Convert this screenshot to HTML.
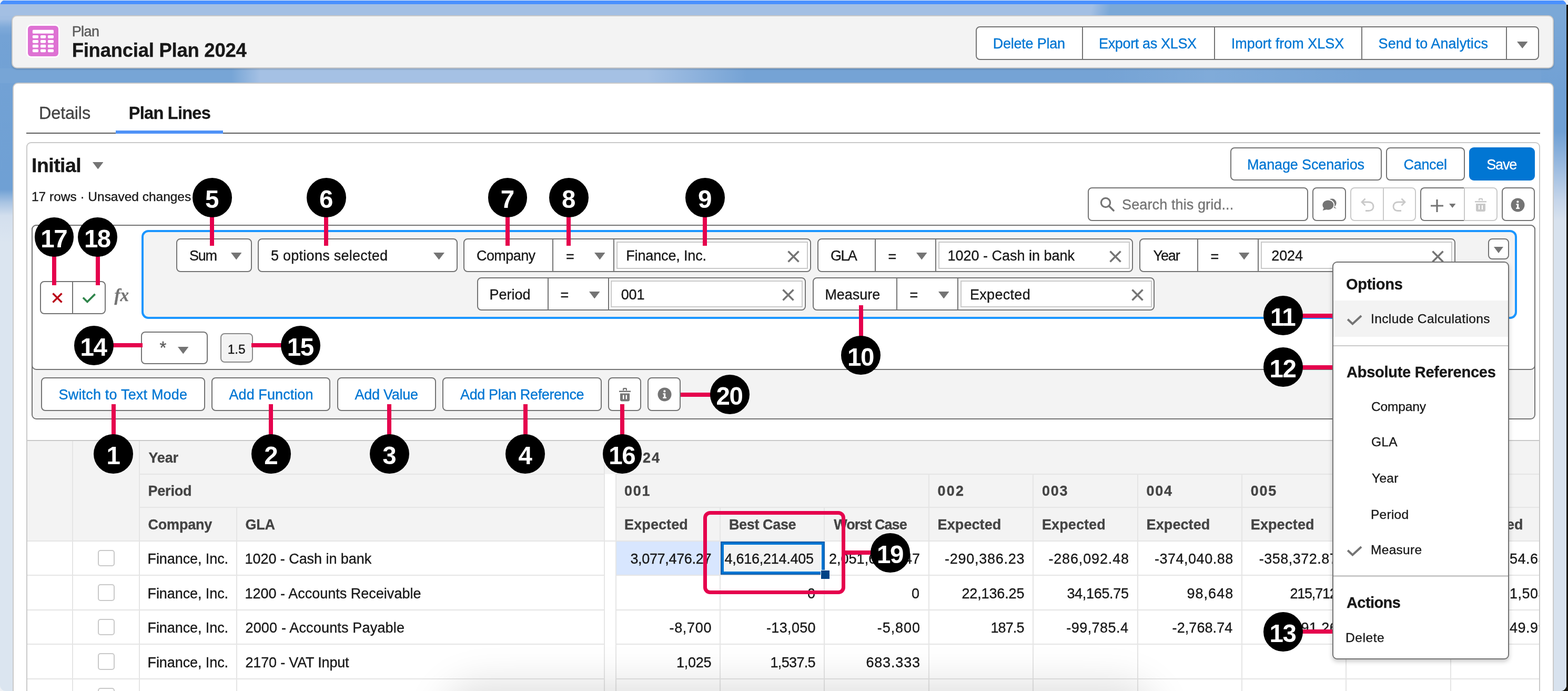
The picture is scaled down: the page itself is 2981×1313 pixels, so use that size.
<!DOCTYPE html>
<html lang="en"><head><meta charset="utf-8"><title>Financial Plan 2024</title>
<style>
html,body{margin:0;padding:0;}
body{width:2981px;height:1313px;overflow:hidden;position:relative;background:#eef1f5;font-family:'Liberation Sans', sans-serif;}
#r{position:absolute;left:0;top:0;width:2978px;height:1313px;overflow:hidden;border-radius:11px;will-change:transform;}
#k{position:absolute;left:2962px;top:9px;width:19px;height:1304px;background:#17160f;}
#r div,#r svg,#r span{position:absolute;box-sizing:border-box;}
#r span{white-space:nowrap;-webkit-text-stroke:0.35px currentColor;}
.c{background:#000;color:#fff;border-radius:50%;text-align:center;font-weight:700;font-size:47.5px;letter-spacing:-1.5px;text-indent:-1.5px;}
.b{border:2px solid #747474;background:#fff;border-radius:8px;}
</style></head>
<body><div id="k"></div><div id="r">
<div style="left:0px;top:0px;width:2981px;height:1313px;background:linear-gradient(180deg,#a2bfe3 0px,#a0bde2 36px,#7faad9 52px,#73a2d5 68px,#6fa0d4 360px,#a9c4e3 385px,#d3dfee 410px,#dbe5f0 460px,#dbe5f0 100%);"></div>
<div style="left:0px;top:7.5px;width:2981px;height:22.5px;background:linear-gradient(100deg,#a3bfe3 0,#a3bfe3 2045px,#8fb3dd 2062px,#7ba8d7 2080px,#7ba8d7 100%);"></div>
<div style="left:0px;top:130px;width:2981px;height:28px;background:linear-gradient(90deg,#77a5d6 0,#77a5d6 440px,#a5c1e4 495px,#a5c1e4 1230px,#8cb1dc 1330px,#75a3d5 1420px,#75a3d5 2100px,#80abd9 2300px,#75a3d5 2600px,#75a3d5 100%);"></div>
<div style="left:2930px;top:29px;width:48px;height:143px;background:linear-gradient(180deg,#7ba8d7 0,#70a0d4 100%);"></div>
<div style="left:0px;top:0px;width:2981px;height:1px;background:#e9eef5;"></div>
<div style="left:0px;top:1px;width:2981px;height:6.5px;background:#4a90fe;"></div>
<div style="left:22px;top:29px;width:2932px;height:101px;background:#f3f3f3;border:2px solid #c9c9c9;border-radius:10px;box-shadow:0 2px 3px rgba(0,0,0,.16);"></div>
<div style="left:24px;top:157px;width:2930px;height:1176px;background:#fff;border:2px solid #c9c9c9;border-radius:10px;"></div>
<div style="left:50px;top:46px;width:64px;height:64px;background:#fff;border-radius:10px;"></div>
<div style="left:53px;top:49px;width:58px;height:58px;background:#de72d3;border-radius:6px;"></div>
<div style="left:1855px;top:50px;width:1071px;height:64px;background:#fff;border:2px solid #747474;border-radius:8px;"></div>
<div style="left:50px;top:252px;width:2878px;height:2px;background:#5c5c5c;"></div>
<div style="left:50px;top:270px;width:2878px;height:1063px;border:2px solid #c9c9c9;border-radius:9px;background:#fff;"></div>
<svg style="left:53px;top:49px;" width="58" height="58" viewBox="0 0 58 58"><g fill="#fff"><rect x="8.9" y="7.8" width="40.1" height="7" rx="1.6"/><rect x="8.9" y="18" width="11.1" height="5.7" rx="1.6"/><rect x="23.9" y="18" width="10.3" height="5.7" rx="1.6"/><rect x="37.9" y="18" width="11.1" height="5.7" rx="1.6"/><rect x="8.9" y="27" width="11.1" height="5.7" rx="1.6"/><rect x="23.9" y="27" width="10.3" height="5.7" rx="1.6"/><rect x="37.9" y="27" width="11.1" height="5.7" rx="1.6"/><rect x="8.9" y="35.8" width="11.1" height="5.7" rx="1.6"/><rect x="23.9" y="35.8" width="10.3" height="5.7" rx="1.6"/><rect x="37.9" y="35.8" width="11.1" height="5.7" rx="1.6"/><rect x="8.9" y="44.5" width="11.1" height="5.7" rx="1.6"/><rect x="23.9" y="44.5" width="10.3" height="5.7" rx="1.6"/><rect x="37.9" y="44.5" width="11.1" height="5.7" rx="1.6"/></g></svg>
<div style="left:2057px;top:50px;width:2px;height:64px;background:#747474;"></div>
<div style="left:2308px;top:50px;width:2px;height:64px;background:#747474;"></div>
<div style="left:2588px;top:50px;width:2px;height:64px;background:#747474;"></div>
<div style="left:2863px;top:50px;width:2px;height:64px;background:#747474;"></div>
<div style="left:220px;top:248px;width:204px;height:6px;background:#4f92f7;"></div>
<div class="b" style="left:2339px;top:280px;width:288px;height:63px;"></div>
<div class="b" style="left:2635px;top:280px;width:150px;height:63px;"></div>
<div style="left:2793px;top:280px;width:125px;height:63px;background:#0176d3;border-radius:9px;"></div>
<div class="b" style="left:2068px;top:356px;width:419px;height:64px;"></div>
<div class="b" style="left:2495px;top:356px;width:64px;height:64px;"></div>
<div style="left:2567px;top:356px;width:125px;height:64px;border:2px solid #c9c9c9;background:#fff;border-radius:8px;"></div>
<div style="left:2700px;top:356px;width:85px;height:64px;border:2px solid #747474;border-right:none;background:#fff;border-radius:8px 0 0 8px;"></div>
<div style="left:2783px;top:356px;width:64px;height:64px;border:2px solid #c9c9c9;background:#fff;border-radius:0 8px 8px 0;"></div>
<div class="b" style="left:2855px;top:356px;width:63px;height:64px;"></div>
<div style="left:60px;top:427px;width:2859px;height:370px;background:#f3f3f3;border:2px solid #747474;border-radius:9px;"></div>
<svg style="left:2091px;top:374px;" width="28" height="28" viewBox="0 0 28 28"><circle cx="11" cy="11" r="8.6" stroke="#747474" stroke-width="3.2" fill="none"/><path d="M17 17L26 26" stroke="#747474" stroke-width="3.6" stroke-linecap="round"/></svg>
<svg style="left:2513.5px;top:377px;" width="28" height="24" viewBox="0 0 28 24"><circle cx="18.2" cy="9" r="8.4" fill="#747474"/><path d="M22 15L27 19.5L19 17Z" fill="#747474"/><ellipse cx="10.9" cy="12.6" rx="12.4" ry="11" fill="#fff"/><ellipse cx="10.9" cy="12.6" rx="10.6" ry="9.2" fill="#747474"/><path d="M3 17.5L0.6 23L8.5 21Z" fill="#747474"/></svg>
<div style="left:2629px;top:356px;width:2px;height:64px;background:#c9c9c9;"></div>
<svg style="left:2586px;top:376px;" width="28" height="26" viewBox="0 0 28 26"><path d="M3 8H16C22 8 25 12 25 16.5C25 21 22 24.5 16 24.5H10" fill="none" stroke="#c9c9c9" stroke-width="2.8"/><path d="M9.5 1.5L3 8L9.5 14.5" fill="none" stroke="#c9c9c9" stroke-width="2.8"/></svg>
<svg style="left:2646px;top:376px;" width="28" height="26" viewBox="0 0 28 26"><path d="M25 8H12C6 8 3 12 3 16.5C3 21 6 24.5 12 24.5H18" fill="none" stroke="#c9c9c9" stroke-width="2.8"/><path d="M18.5 1.5L25 8L18.5 14.5" fill="none" stroke="#c9c9c9" stroke-width="2.8"/></svg>
<svg style="left:2718.5px;top:378.2px;" width="26" height="26" viewBox="0 0 26 26"><path d="M13 1V25M1 13H25" stroke="#747474" stroke-width="3.2" fill="none"/></svg>
<svg style="left:2802px;top:375px;" width="26" height="28" viewBox="0 0 26 28"><path d="M2 7H24V9.5H2Z M9 3.5Q9 1.5 11 1.5H15Q17 1.5 17 3.5V6H15V3.8H11V6H9Z M4 12H22V24Q22 27 19 27H7Q4 27 4 24Z M9 15V23H11V15Z M15 15V23H17V15Z" fill="#c9c9c9" fill-rule="evenodd"/></svg>
<svg style="left:2872.2px;top:375.5px;" width="27" height="27" viewBox="0 0 27 27"><circle cx="13.5" cy="13.5" r="13" fill="#747474"/><path d="M10.4 11.2H15.2V18.6H17V21H10.2V18.6H12V13.6H10.4Z" fill="#fff"/><circle cx="13.4" cy="7.4" r="2.1" fill="#fff"/></svg>
<div style="left:60px;top:427px;width:2859px;height:276px;background:#fff;border:2px solid #747474;border-radius:9px;"></div>
<div class="b" style="left:76px;top:534px;width:125px;height:63px;"></div>
<div style="left:269px;top:437px;width:2615px;height:169px;background:#f3f3f3;border:4.2px solid #1b96ff;border-radius:13px;"></div>
<div style="left:137px;top:534px;width:2px;height:63px;background:#747474;"></div>
<svg style="left:99px;top:556.2px;" width="20" height="20" viewBox="0 0 20 20"><path d="M1.5 1.5L18.5 18.5M18.5 1.5L1.5 18.5" stroke="#ba0517" stroke-width="3.4" fill="none"/></svg>
<svg style="left:156px;top:557px;" width="26" height="19" viewBox="0 0 26 19"><path d="M1.9 8.4L10.0 16.5L24.7 1.9" stroke="#2e844a" stroke-width="3.6" fill="none"/></svg>
<div class="b" style="left:335px;top:453px;width:144px;height:64px;"></div>
<div class="b" style="left:490px;top:453px;width:380px;height:64px;"></div>
<div class="b" style="left:881px;top:453px;width:661px;height:64px;"></div>
<div class="b" style="left:1554px;top:453px;width:600px;height:64px;"></div>
<div class="b" style="left:2166px;top:453px;width:601px;height:64px;"></div>
<div class="b" style="left:2829px;top:453px;width:40px;height:40px;"></div>
<div class="b" style="left:907px;top:527px;width:625px;height:63px;"></div>
<div class="b" style="left:1545px;top:527px;width:650px;height:63px;"></div>
<div class="b" style="left:268px;top:630px;width:127px;height:62px;"></div>
<div style="left:419px;top:633px;width:62px;height:56px;background:#f3f3f3;border:2px solid #8a8a8a;border-radius:8px;"></div>
<div class="b" style="left:78px;top:717px;width:312px;height:64px;"></div>
<div class="b" style="left:402px;top:717px;width:226px;height:64px;"></div>
<div class="b" style="left:641px;top:717px;width:188px;height:64px;"></div>
<div class="b" style="left:841px;top:717px;width:303px;height:64px;"></div>
<div class="b" style="left:1156px;top:717px;width:63px;height:64px;"></div>
<div class="b" style="left:1231px;top:717px;width:63px;height:64px;"></div>
<span style="left:217.50px;top:545.00px;font-size:33px;line-height:33px;color:#747474;font-family:'Liberation Serif', serif;font-style:italic;font-weight:700;">fx</span>
<div style="left:1050px;top:453px;width:2px;height:64px;background:#747474;"></div>
<div style="left:1166px;top:453px;width:2px;height:64px;background:#747474;"></div>
<div style="left:1172px;top:459px;width:364px;height:52px;border:2px solid #c9c9c9;background:#fff;"></div>
<div style="left:1663px;top:453px;width:2px;height:64px;background:#747474;"></div>
<div style="left:1778px;top:453px;width:2px;height:64px;background:#747474;"></div>
<div style="left:1784px;top:459px;width:364px;height:52px;border:2px solid #c9c9c9;background:#fff;"></div>
<div style="left:2276px;top:453px;width:2px;height:64px;background:#747474;"></div>
<div style="left:2391px;top:453px;width:2px;height:64px;background:#747474;"></div>
<div style="left:2397px;top:459px;width:364px;height:52px;border:2px solid #c9c9c9;background:#fff;"></div>
<div style="left:1041px;top:527px;width:2px;height:63px;background:#747474;"></div>
<div style="left:1156px;top:527px;width:2px;height:63px;background:#747474;"></div>
<div style="left:1161px;top:533px;width:365px;height:51px;border:2px solid #c9c9c9;background:#fff;"></div>
<div style="left:1704px;top:527px;width:2px;height:63px;background:#747474;"></div>
<div style="left:1820px;top:527px;width:2px;height:63px;background:#747474;"></div>
<div style="left:1826px;top:533px;width:364px;height:51px;border:2px solid #c9c9c9;background:#fff;"></div>
<svg style="left:2883.75px;top:78.5px;" width="20.5" height="13" viewBox="0 0 20.5 13"><path d="M0 0H20.5L10.25 13Z" fill="#747474"/></svg>
<svg style="left:175.75px;top:308.25px;" width="20.5" height="13.5" viewBox="0 0 20.5 13.5"><path d="M0 0H20.5L10.25 13.5Z" fill="#747474"/></svg>
<svg style="left:2754.75px;top:387.2px;" width="12.5" height="8" viewBox="0 0 12.5 8"><path d="M0 0H12.5L6.25 8Z" fill="#747474"/></svg>
<svg style="left:438.75px;top:480.25px;" width="20.5" height="13.5" viewBox="0 0 20.5 13.5"><path d="M0 0H20.5L10.25 13.5Z" fill="#747474"/></svg>
<svg style="left:823.5px;top:480.25px;" width="21" height="13.5" viewBox="0 0 21 13.5"><path d="M0 0H21L10.5 13.5Z" fill="#747474"/></svg>
<svg style="left:1129.75px;top:480.25px;" width="20.5" height="13.5" viewBox="0 0 20.5 13.5"><path d="M0 0H20.5L10.25 13.5Z" fill="#747474"/></svg>
<svg style="left:1496.5px;top:475.5px;" width="23" height="23" viewBox="0 0 23 23"><path d="M1.5 1.5L21.5 21.5M21.5 1.5L1.5 21.5" stroke="#747474" stroke-width="3.5" fill="none"/></svg>
<svg style="left:1741.75px;top:480.25px;" width="20.5" height="13.5" viewBox="0 0 20.5 13.5"><path d="M0 0H20.5L10.25 13.5Z" fill="#747474"/></svg>
<svg style="left:2108.5px;top:475.5px;" width="23" height="23" viewBox="0 0 23 23"><path d="M1.5 1.5L21.5 21.5M21.5 1.5L1.5 21.5" stroke="#747474" stroke-width="3.5" fill="none"/></svg>
<svg style="left:2354.75px;top:480.25px;" width="20.5" height="13.5" viewBox="0 0 20.5 13.5"><path d="M0 0H20.5L10.25 13.5Z" fill="#747474"/></svg>
<svg style="left:2722px;top:475.5px;" width="23" height="23" viewBox="0 0 23 23"><path d="M1.5 1.5L21.5 21.5M21.5 1.5L1.5 21.5" stroke="#747474" stroke-width="3.5" fill="none"/></svg>
<svg style="left:2840px;top:469px;" width="18" height="12" viewBox="0 0 18 12"><path d="M0 0H18L9.0 12Z" fill="#747474"/></svg>
<svg style="left:1119.75px;top:553.75px;" width="20.5" height="13.5" viewBox="0 0 20.5 13.5"><path d="M0 0H20.5L10.25 13.5Z" fill="#747474"/></svg>
<svg style="left:1486.5px;top:549px;" width="23" height="23" viewBox="0 0 23 23"><path d="M1.5 1.5L21.5 21.5M21.5 1.5L1.5 21.5" stroke="#747474" stroke-width="3.5" fill="none"/></svg>
<svg style="left:1783.75px;top:553.75px;" width="20.5" height="13.5" viewBox="0 0 20.5 13.5"><path d="M0 0H20.5L10.25 13.5Z" fill="#747474"/></svg>
<svg style="left:2150.5px;top:549px;" width="23" height="23" viewBox="0 0 23 23"><path d="M1.5 1.5L21.5 21.5M21.5 1.5L1.5 21.5" stroke="#747474" stroke-width="3.5" fill="none"/></svg>
<svg style="left:337.75px;top:659.25px;" width="20.5" height="13.5" viewBox="0 0 20.5 13.5"><path d="M0 0H20.5L10.25 13.5Z" fill="#747474"/></svg>
<svg style="left:1175.5px;top:736px;" width="24" height="27" viewBox="0 0 24 27"><path d="M1 6.5H23V9H1Z M8 3Q8 1 10 1H14Q16 1 16 3V6H14V3.4H10V6H8Z M3 11.5H21V23.5Q21 26.5 18 26.5H6Q3 26.5 3 23.5Z M8 14.5V22.5H10.4V14.5Z M13.6 14.5V22.5H16V14.5Z" fill="#747474" fill-rule="evenodd"/></svg>
<svg style="left:1249.5px;top:735.5px;" width="27" height="27" viewBox="0 0 27 27"><circle cx="13.5" cy="13.5" r="13" fill="#747474"/><path d="M10.4 11.2H15.2V18.6H17V21H10.2V18.6H12V13.6H10.4Z" fill="#fff"/><circle cx="13.4" cy="7.4" r="2.1" fill="#fff"/></svg>
<span style="left:136.70px;top:47.00px;font-size:27px;line-height:27px;color:#5a5a5a;letter-spacing:-0.61px;">Plan</span>
<span style="left:136.70px;top:78.00px;font-size:36.5px;line-height:36.5px;font-weight:700;color:#181818;letter-spacing:-0.26px;">Financial Plan 2024</span>
<span style="left:1887.70px;top:70.00px;font-size:27px;line-height:27px;color:#0176d3;letter-spacing:-0.23px;">Delete Plan</span>
<span style="left:2089.00px;top:70.00px;font-size:27px;line-height:27px;color:#0176d3;letter-spacing:-0.35px;">Export as XLSX</span>
<span style="left:2340.70px;top:70.00px;font-size:27px;line-height:27px;color:#0176d3;">Import from XLSX</span>
<span style="left:2620.60px;top:70.00px;font-size:27px;line-height:27px;color:#0176d3;letter-spacing:0.08px;">Send to Analytics</span>
<span style="left:74.00px;top:199.00px;font-size:32.5px;line-height:32.5px;color:#444444;letter-spacing:-0.20px;">Details</span>
<span style="left:244.80px;top:199.00px;font-size:32.5px;line-height:32.5px;font-weight:700;color:#181818;letter-spacing:-0.73px;">Plan Lines</span>
<span style="left:60.00px;top:296.00px;font-size:37.5px;line-height:37.5px;font-weight:700;color:#181818;letter-spacing:-0.53px;">Initial</span>
<span style="left:60.00px;top:362.00px;font-size:24.5px;line-height:24.5px;color:#181818;letter-spacing:-0.02px;">17 rows · Unsaved changes</span>
<span style="left:2371.00px;top:300.00px;font-size:27px;line-height:27px;color:#0176d3;letter-spacing:-0.14px;">Manage Scenarios</span>
<span style="left:2668.50px;top:300.00px;font-size:27px;line-height:27px;color:#0176d3;letter-spacing:-0.31px;">Cancel</span>
<span style="left:2826.30px;top:300.00px;font-size:27px;line-height:27px;color:#ffffff;letter-spacing:-1.21px;">Save</span>
<span style="left:2133.10px;top:376.00px;font-size:27px;line-height:27px;color:#747474;letter-spacing:0.11px;">Search this grid...</span>
<span style="left:360.00px;top:473.00px;font-size:27px;line-height:27px;color:#181818;letter-spacing:-1.21px;">Sum</span>
<span style="left:515.00px;top:473.00px;font-size:27px;line-height:27px;color:#181818;letter-spacing:0.26px;">5 options selected</span>
<span style="left:906.00px;top:473.00px;font-size:27px;line-height:27px;color:#181818;letter-spacing:-0.58px;">Company</span>
<span style="left:1076.00px;top:475.00px;font-size:27px;line-height:27px;color:#181818;">=</span>
<span style="left:1190.20px;top:473.00px;font-size:27px;line-height:27px;color:#181818;letter-spacing:-0.14px;">Finance, Inc.</span>
<span style="left:1579.00px;top:473.00px;font-size:27px;line-height:27px;color:#181818;letter-spacing:-1.61px;">GLA</span>
<span style="left:1688.50px;top:475.00px;font-size:27px;line-height:27px;color:#181818;">=</span>
<span style="left:1801.60px;top:473.00px;font-size:27px;line-height:27px;color:#181818;letter-spacing:-0.02px;">1020 - Cash in bank</span>
<span style="left:2192.50px;top:473.00px;font-size:27px;line-height:27px;color:#181818;letter-spacing:-1.12px;">Year</span>
<span style="left:2301.50px;top:475.00px;font-size:27px;line-height:27px;color:#181818;">=</span>
<span style="left:2417.30px;top:473.00px;font-size:27px;line-height:27px;color:#181818;letter-spacing:-0.15px;">2024</span>
<span style="left:930.40px;top:547.00px;font-size:27px;line-height:27px;color:#181818;letter-spacing:0.03px;">Period</span>
<span style="left:1065.50px;top:548.00px;font-size:27px;line-height:27px;color:#181818;">=</span>
<span style="left:1180.70px;top:547.00px;font-size:27px;line-height:27px;color:#181818;letter-spacing:-0.15px;">001</span>
<span style="left:1568.40px;top:547.00px;font-size:27px;line-height:27px;color:#181818;letter-spacing:-0.04px;">Measure</span>
<span style="left:1729.50px;top:548.00px;font-size:27px;line-height:27px;color:#181818;">=</span>
<span style="left:1843.90px;top:547.00px;font-size:27px;line-height:27px;color:#181818;letter-spacing:0.32px;">Expected</span>
<span style="left:303.50px;top:644.00px;font-size:33px;line-height:33px;color:#5c5c5c;">*</span>
<span style="left:432.70px;top:652.00px;font-size:24.5px;line-height:24.5px;color:#181818;letter-spacing:-0.12px;">1.5</span>
<span style="left:111.50px;top:737.00px;font-size:27px;line-height:27px;color:#0176d3;letter-spacing:0.19px;">Switch to Text Mode</span>
<span style="left:435.50px;top:737.00px;font-size:27px;line-height:27px;color:#0176d3;letter-spacing:0.08px;">Add Function</span>
<span style="left:674.50px;top:737.00px;font-size:27px;line-height:27px;color:#0176d3;letter-spacing:-0.26px;">Add Value</span>
<span style="left:875.00px;top:737.00px;font-size:27px;line-height:27px;color:#0176d3;letter-spacing:-0.36px;">Add Plan Reference</span>
<div style="left:52px;top:838px;width:2874px;height:190px;background:#f3f3f3;"></div>
<div style="left:52px;top:836px;width:2874px;height:2px;background:#c9c9c9;"></div>
<div style="left:1149px;top:901px;width:22px;height:412px;background:#fff;"></div>
<div style="left:1172px;top:1029px;width:196px;height:63px;background:#d8e6fe;"></div>
<div style="left:137px;top:838px;width:2px;height:475px;background:#e5e5e5;"></div>
<div style="left:264px;top:838px;width:2px;height:475px;background:#e5e5e5;"></div>
<div style="left:449px;top:964px;width:2px;height:349px;background:#e5e5e5;"></div>
<div style="left:1148px;top:838px;width:2px;height:475px;background:#e5e5e5;"></div>
<div style="left:1170px;top:901px;width:2px;height:412px;background:#e5e5e5;"></div>
<div style="left:265px;top:900px;width:884px;height:2px;background:#e5e5e5;"></div>
<div style="left:265px;top:963px;width:884px;height:2px;background:#e5e5e5;"></div>
<div style="left:1171px;top:900px;width:1755px;height:2px;background:#e5e5e5;"></div>
<div style="left:1171px;top:963px;width:1755px;height:2px;background:#e5e5e5;"></div>
<div style="left:52px;top:1027px;width:2874px;height:2px;background:#e5e5e5;"></div>
<div style="left:52px;top:1092px;width:1097px;height:2px;background:#e5e5e5;"></div>
<div style="left:1171px;top:1092px;width:1755px;height:2px;background:#e5e5e5;"></div>
<div style="left:52px;top:1158px;width:1097px;height:2px;background:#e5e5e5;"></div>
<div style="left:1171px;top:1158px;width:1755px;height:2px;background:#e5e5e5;"></div>
<div style="left:52px;top:1223px;width:1097px;height:2px;background:#e5e5e5;"></div>
<div style="left:1171px;top:1223px;width:1755px;height:2px;background:#e5e5e5;"></div>
<div style="left:52px;top:1289px;width:1097px;height:2px;background:#e5e5e5;"></div>
<div style="left:1171px;top:1289px;width:1755px;height:2px;background:#e5e5e5;"></div>
<div style="left:52px;top:1354px;width:1097px;height:2px;background:#e5e5e5;"></div>
<div style="left:1171px;top:1354px;width:1755px;height:2px;background:#e5e5e5;"></div>
<div style="left:1368px;top:964px;width:2px;height:349px;background:#e5e5e5;"></div>
<div style="left:1566px;top:964px;width:2px;height:349px;background:#e5e5e5;"></div>
<div style="left:1765px;top:901px;width:2px;height:412px;background:#e5e5e5;"></div>
<div style="left:1963px;top:901px;width:2px;height:412px;background:#e5e5e5;"></div>
<div style="left:2162px;top:901px;width:2px;height:412px;background:#e5e5e5;"></div>
<div style="left:2360px;top:901px;width:2px;height:412px;background:#e5e5e5;"></div>
<div style="left:2558px;top:901px;width:2px;height:412px;background:#e5e5e5;"></div>
<div style="left:2757px;top:901px;width:2px;height:412px;background:#e5e5e5;"></div>
<div style="left:186px;top:1045px;width:32px;height:31px;border:2px solid #c9c9c9;border-radius:5px;background:#fff;"></div>
<div style="left:186px;top:1110px;width:32px;height:32px;border:2px solid #c9c9c9;border-radius:5px;background:#fff;"></div>
<div style="left:186px;top:1176px;width:32px;height:31px;border:2px solid #c9c9c9;border-radius:5px;background:#fff;"></div>
<div style="left:186px;top:1241px;width:32px;height:32px;border:2px solid #c9c9c9;border-radius:5px;background:#fff;"></div>
<div style="left:186px;top:1307px;width:32px;height:31px;border:2px solid #c9c9c9;border-radius:5px;background:#fff;"></div>
<span style="left:282.50px;top:857.00px;font-size:27px;line-height:27px;font-weight:700;color:#444444;letter-spacing:-0.20px;">Year</span>
<span style="left:281.50px;top:920.00px;font-size:27px;line-height:27px;font-weight:700;color:#444444;letter-spacing:-0.20px;">Period</span>
<span style="left:281.50px;top:984.00px;font-size:27px;line-height:27px;font-weight:700;color:#444444;letter-spacing:-0.20px;">Company</span>
<span style="left:466.50px;top:984.00px;font-size:27px;line-height:27px;font-weight:700;color:#444444;letter-spacing:-0.20px;">GLA</span>
<span style="left:1188.00px;top:857.00px;font-size:27px;line-height:27px;font-weight:700;color:#444444;letter-spacing:1.98px;">2024</span>
<span style="left:1187.10px;top:920.00px;font-size:27px;line-height:27px;font-weight:700;color:#444444;letter-spacing:1.73px;">001</span>
<span style="left:1782.60px;top:920.00px;font-size:27px;line-height:27px;font-weight:700;color:#444444;letter-spacing:2.23px;">002</span>
<span style="left:1981.00px;top:920.00px;font-size:27px;line-height:27px;font-weight:700;color:#444444;letter-spacing:1.73px;">003</span>
<span style="left:2179.60px;top:920.00px;font-size:27px;line-height:27px;font-weight:700;color:#444444;letter-spacing:1.73px;">004</span>
<span style="left:2377.80px;top:920.00px;font-size:27px;line-height:27px;font-weight:700;color:#444444;letter-spacing:1.73px;">005</span>
<span style="left:2576.40px;top:920.00px;font-size:27px;line-height:27px;font-weight:700;color:#444444;letter-spacing:1.73px;">006</span>
<span style="left:2774.80px;top:920.00px;font-size:27px;line-height:27px;font-weight:700;color:#444444;letter-spacing:2.23px;">007</span>
<span style="left:1187.10px;top:984.00px;font-size:27px;line-height:27px;font-weight:700;color:#444444;letter-spacing:0.09px;">Expected</span>
<span style="left:1386.00px;top:984.00px;font-size:27px;line-height:27px;font-weight:700;color:#444444;letter-spacing:-0.38px;">Best Case</span>
<span style="left:1585.20px;top:984.00px;font-size:27px;line-height:27px;font-weight:700;color:#444444;letter-spacing:-0.95px;">Worst Case</span>
<span style="left:1782.60px;top:984.00px;font-size:27px;line-height:27px;font-weight:700;color:#444444;letter-spacing:0.09px;">Expected</span>
<span style="left:1981.00px;top:984.00px;font-size:27px;line-height:27px;font-weight:700;color:#444444;letter-spacing:0.09px;">Expected</span>
<span style="left:2179.60px;top:984.00px;font-size:27px;line-height:27px;font-weight:700;color:#444444;letter-spacing:0.09px;">Expected</span>
<span style="left:2377.80px;top:984.00px;font-size:27px;line-height:27px;font-weight:700;color:#444444;letter-spacing:0.09px;">Expected</span>
<span style="left:2576.40px;top:984.00px;font-size:27px;line-height:27px;font-weight:700;color:#444444;letter-spacing:0.09px;">Expected</span>
<span style="left:2774.80px;top:984.00px;font-size:27px;line-height:27px;font-weight:700;color:#444444;letter-spacing:0.09px;">Expected</span>
<span style="left:280.50px;top:1049.00px;font-size:27px;line-height:27px;color:#181818;letter-spacing:-0.08px;">Finance, Inc.</span>
<span style="left:465.50px;top:1049.00px;font-size:27px;line-height:27px;color:#181818;letter-spacing:-0.05px;">1020 - Cash in bank</span>
<span style="left:1198.40px;top:1049.00px;font-size:27px;line-height:27px;color:#181818;letter-spacing:-0.33px;">3,077,476.27</span>
<span style="left:1575.90px;top:1049.00px;font-size:27px;line-height:27px;color:#181818;letter-spacing:0.04px;">2,051,650.847</span>
<span style="left:1796.00px;top:1049.00px;font-size:27px;line-height:27px;color:#181818;letter-spacing:0.73px;">-290,386.23</span>
<span style="left:1993.40px;top:1049.00px;font-size:27px;line-height:27px;color:#181818;letter-spacing:0.85px;">-286,092.48</span>
<span style="left:2195.00px;top:1049.00px;font-size:27px;line-height:27px;color:#181818;letter-spacing:0.51px;">-374,040.88</span>
<span style="left:2393.70px;top:1049.00px;font-size:27px;line-height:27px;color:#181818;letter-spacing:0.50px;">-358,372.87</span>
<span style="left:2593.60px;top:1049.00px;font-size:27px;line-height:27px;color:#181818;letter-spacing:0.45px;">-352,118.04</span>
<span style="left:2790.79px;top:1049.00px;font-size:27px;line-height:27px;color:#181818;letter-spacing:0.45px;">-341,254.65</span>
<span style="left:280.50px;top:1115.00px;font-size:27px;line-height:27px;color:#181818;letter-spacing:-0.08px;">Finance, Inc.</span>
<span style="left:465.50px;top:1115.00px;font-size:27px;line-height:27px;color:#181818;letter-spacing:0.01px;">1200 - Accounts Receivable</span>
<span style="left:1535.00px;top:1115.00px;font-size:27px;line-height:27px;color:#181818;letter-spacing:0.60px;">0</span>
<span style="left:1733.00px;top:1115.00px;font-size:27px;line-height:27px;color:#181818;letter-spacing:1.00px;">0</span>
<span style="left:1828.50px;top:1115.00px;font-size:27px;line-height:27px;color:#181818;letter-spacing:-0.15px;">22,136.25</span>
<span style="left:2028.40px;top:1115.00px;font-size:27px;line-height:27px;color:#181818;letter-spacing:-0.31px;">34,165.75</span>
<span style="left:2256.50px;top:1115.00px;font-size:27px;line-height:27px;color:#181818;letter-spacing:1.03px;">98,648</span>
<span style="left:2452.40px;top:1115.00px;font-size:27px;line-height:27px;color:#181818;letter-spacing:-1.20px;">215,712</span>
<span style="left:2640.92px;top:1115.00px;font-size:27px;line-height:27px;color:#181818;letter-spacing:0.45px;">187,431</span>
<span style="left:2839.12px;top:1115.00px;font-size:27px;line-height:27px;color:#181818;letter-spacing:0.45px;">241,503</span>
<span style="left:280.50px;top:1180.00px;font-size:27px;line-height:27px;color:#181818;letter-spacing:-0.08px;">Finance, Inc.</span>
<span style="left:466.50px;top:1180.00px;font-size:27px;line-height:27px;color:#181818;letter-spacing:0.17px;">2000 - Accounts Payable</span>
<span style="left:1272.50px;top:1180.00px;font-size:27px;line-height:27px;color:#181818;letter-spacing:0.67px;">-8,700</span>
<span style="left:1457.00px;top:1180.00px;font-size:27px;line-height:27px;color:#181818;letter-spacing:0.34px;">-13,050</span>
<span style="left:1667.80px;top:1180.00px;font-size:27px;line-height:27px;color:#181818;letter-spacing:0.93px;">-5,800</span>
<span style="left:1883.40px;top:1180.00px;font-size:27px;line-height:27px;color:#181818;letter-spacing:-0.89px;">187.5</span>
<span style="left:2027.30px;top:1180.00px;font-size:27px;line-height:27px;color:#181818;letter-spacing:0.45px;">-99,785.4</span>
<span style="left:2228.60px;top:1180.00px;font-size:27px;line-height:27px;color:#181818;letter-spacing:0.07px;">-2,768.74</span>
<span style="left:2425.13px;top:1180.00px;font-size:27px;line-height:27px;color:#181818;letter-spacing:0.45px;">-4,391.26</span>
<span style="left:2641.00px;top:1180.00px;font-size:27px;line-height:27px;color:#181818;letter-spacing:0.45px;">-3,118.5</span>
<span style="left:2821.73px;top:1180.00px;font-size:27px;line-height:27px;color:#181818;letter-spacing:0.45px;">-2,849.99</span>
<span style="left:280.50px;top:1246.00px;font-size:27px;line-height:27px;color:#181818;letter-spacing:-0.08px;">Finance, Inc.</span>
<span style="left:466.50px;top:1246.00px;font-size:27px;line-height:27px;color:#181818;letter-spacing:-0.17px;">2170 - VAT Input</span>
<span style="left:1286.00px;top:1246.00px;font-size:27px;line-height:27px;color:#181818;letter-spacing:-0.29px;">1,025</span>
<span style="left:1464.50px;top:1246.00px;font-size:27px;line-height:27px;color:#181818;letter-spacing:-0.66px;">1,537.5</span>
<span style="left:1646.40px;top:1246.00px;font-size:27px;line-height:27px;color:#181818;letter-spacing:0.84px;">683.333</span>
<div style="left:1370px;top:1029px;width:198px;height:63px;border:2px solid #0b5cab;background:#f3f3f3;box-shadow:inset 0 0 0 4px #0176d3;"></div>
<span style="left:1377.50px;top:1049.00px;font-size:27px;line-height:27px;color:#181818;letter-spacing:-0.26px;">4,616,214.405</span>
<div style="left:1560px;top:1083px;width:17px;height:17px;background:#014486;border-left:1px solid #fff;border-top:1px solid #fff;"></div>
<div style="left:2928px;top:272px;width:24px;height:1041px;background:#fff;"></div>
<div style="left:2926px;top:280px;width:2px;height:1033px;background:#c9c9c9;"></div>
<div style="left:2952px;top:170px;width:2px;height:1143px;background:#c9c9c9;"></div>
<div style="left:2954px;top:170px;width:24px;height:1143px;background:linear-gradient(180deg,#6fa0d4 0,#6fa0d4 80px,#9dbce0 150px,#c5d5ea 210px,#d8e2ee 250px,#d8e2ee 100%);"></div>
<div style="left:885px;top:1343px;width:1270px;height:60px;border-radius:30px;box-shadow:0 0 75px 45px rgba(0,0,0,.13);"></div>
<div style="left:2533px;top:497px;width:336px;height:756px;background:#fff;border:2px solid #747474;border-radius:9px;box-shadow:0 4px 8px rgba(0,0,0,.22);"></div>
<div style="left:2535px;top:571px;width:332px;height:69px;background:#f3f3f3;"></div>
<div style="left:2535px;top:656px;width:332px;height:2px;background:#c9c9c9;"></div>
<div style="left:2535px;top:1093px;width:332px;height:3px;background:#c9c9c9;"></div>
<svg style="left:2560.4px;top:598.2px;" width="29.6" height="20" viewBox="0 0 29.6 20"><path d="M2.2 8.8L11.4 17.4L28.1 2.0" stroke="#747474" stroke-width="4" fill="none"/></svg>
<svg style="left:2560.4px;top:1037px;" width="29.6" height="20" viewBox="0 0 29.6 20"><path d="M2.2 8.8L11.4 17.4L28.1 2.0" stroke="#747474" stroke-width="4" fill="none"/></svg>
<span style="left:2559.00px;top:526.00px;font-size:29px;line-height:29px;font-weight:700;color:#181818;letter-spacing:-0.29px;">Options</span>
<span style="left:2606.00px;top:594.00px;font-size:24.5px;line-height:24.5px;color:#181818;letter-spacing:0.38px;">Include Calculations</span>
<span style="left:2560.00px;top:693.00px;font-size:29px;line-height:29px;font-weight:700;color:#181818;letter-spacing:-0.26px;">Absolute References</span>
<span style="left:2607.00px;top:761.00px;font-size:24.5px;line-height:24.5px;color:#181818;letter-spacing:-0.13px;">Company</span>
<span style="left:2607.00px;top:828.00px;font-size:24.5px;line-height:24.5px;color:#181818;letter-spacing:0.30px;">GLA</span>
<span style="left:2608.00px;top:897.00px;font-size:24.5px;line-height:24.5px;color:#181818;letter-spacing:0.30px;">Year</span>
<span style="left:2606.00px;top:966.00px;font-size:24.5px;line-height:24.5px;color:#181818;letter-spacing:0.26px;">Period</span>
<span style="left:2606.00px;top:1033.00px;font-size:24.5px;line-height:24.5px;color:#181818;letter-spacing:0.30px;">Measure</span>
<span style="left:2560.00px;top:1131.00px;font-size:29px;line-height:29px;font-weight:700;color:#181818;letter-spacing:-0.59px;">Actions</span>
<span style="left:2558.00px;top:1200.00px;font-size:24.5px;line-height:24.5px;color:#181818;letter-spacing:0.56px;">Delete</span>
<div style="left:399px;top:405px;width:8px;height:62px;background:#e5004d;"></div>
<div style="left:616px;top:405px;width:8px;height:62px;background:#e5004d;"></div>
<div style="left:961px;top:405px;width:8px;height:62px;background:#e5004d;"></div>
<div style="left:1077px;top:405px;width:8px;height:62px;background:#e5004d;"></div>
<div style="left:1336px;top:405px;width:8px;height:62px;background:#e5004d;"></div>
<div style="left:99px;top:480px;width:8px;height:62px;background:#e5004d;"></div>
<div style="left:182px;top:480px;width:8px;height:62px;background:#e5004d;"></div>
<div style="left:210px;top:652px;width:61px;height:8px;background:#e5004d;"></div>
<div style="left:478px;top:652px;width:62px;height:8px;background:#e5004d;"></div>
<div style="left:1633px;top:580px;width:8px;height:60px;background:#e5004d;"></div>
<div style="left:2470px;top:596px;width:63px;height:8px;background:#e5004d;"></div>
<div style="left:2470px;top:694px;width:63px;height:8px;background:#e5004d;"></div>
<div style="left:2470px;top:1196px;width:63px;height:8px;background:#e5004d;"></div>
<div style="left:1294px;top:746px;width:66px;height:8px;background:#e5004d;"></div>
<div style="left:212px;top:768px;width:8px;height:67px;background:#e5004d;"></div>
<div style="left:511px;top:768px;width:8px;height:67px;background:#e5004d;"></div>
<div style="left:736px;top:768px;width:8px;height:67px;background:#e5004d;"></div>
<div style="left:995px;top:768px;width:8px;height:67px;background:#e5004d;"></div>
<div style="left:1179px;top:768px;width:8px;height:67px;background:#e5004d;"></div>
<div style="left:1337px;top:971px;width:270px;height:158px;border:7.5px solid #e5004d;border-radius:13px;"></div>
<div style="left:1604px;top:1046px;width:61px;height:8px;background:#e5004d;"></div>
<div class="c" style="left:365.8px;top:337.8px;width:74.8px;height:74.8px;line-height:81.8px;">5</div>
<div class="c" style="left:582.9px;top:337.8px;width:74.8px;height:74.8px;line-height:81.8px;">6</div>
<div class="c" style="left:927.6px;top:337.8px;width:74.8px;height:74.8px;line-height:81.8px;">7</div>
<div class="c" style="left:1043.9px;top:337.8px;width:74.8px;height:74.8px;line-height:81.8px;">8</div>
<div class="c" style="left:1302.9px;top:337.8px;width:74.8px;height:74.8px;line-height:81.8px;">9</div>
<div class="c" style="left:65.6px;top:412.9px;width:74.8px;height:74.8px;line-height:81.8px;">17</div>
<div class="c" style="left:148.2px;top:412.9px;width:74.8px;height:74.8px;line-height:81.8px;">18</div>
<div class="c" style="left:140.8px;top:618.8px;width:74.8px;height:74.8px;line-height:81.8px;">14</div>
<div class="c" style="left:534.1px;top:618.8px;width:74.8px;height:74.8px;line-height:81.8px;">15</div>
<div class="c" style="left:1599.4px;top:637.6px;width:74.8px;height:74.8px;line-height:81.8px;">10</div>
<div class="c" style="left:2401.9px;top:562.4px;width:74.8px;height:74.8px;line-height:81.8px;">11</div>
<div class="c" style="left:2401.9px;top:659.8px;width:74.8px;height:74.8px;line-height:81.8px;">12</div>
<div class="c" style="left:2401.9px;top:1162.8px;width:74.8px;height:74.8px;line-height:81.8px;">13</div>
<div class="c" style="left:1349.9px;top:712.1px;width:74.8px;height:74.8px;line-height:81.8px;">20</div>
<div class="c" style="left:178.2px;top:825.0px;width:74.8px;height:74.8px;line-height:81.8px;">1</div>
<div class="c" style="left:478.0px;top:825.0px;width:74.8px;height:74.8px;line-height:81.8px;">2</div>
<div class="c" style="left:703.0px;top:825.0px;width:74.8px;height:74.8px;line-height:81.8px;">3</div>
<div class="c" style="left:961.4px;top:825.0px;width:74.8px;height:74.8px;line-height:81.8px;">4</div>
<div class="c" style="left:1145.5px;top:825.0px;width:74.8px;height:74.8px;line-height:81.8px;">16</div>
<div class="c" style="left:1655.4px;top:1013.1px;width:74.8px;height:74.8px;line-height:81.8px;">19</div>
</div></body></html>
